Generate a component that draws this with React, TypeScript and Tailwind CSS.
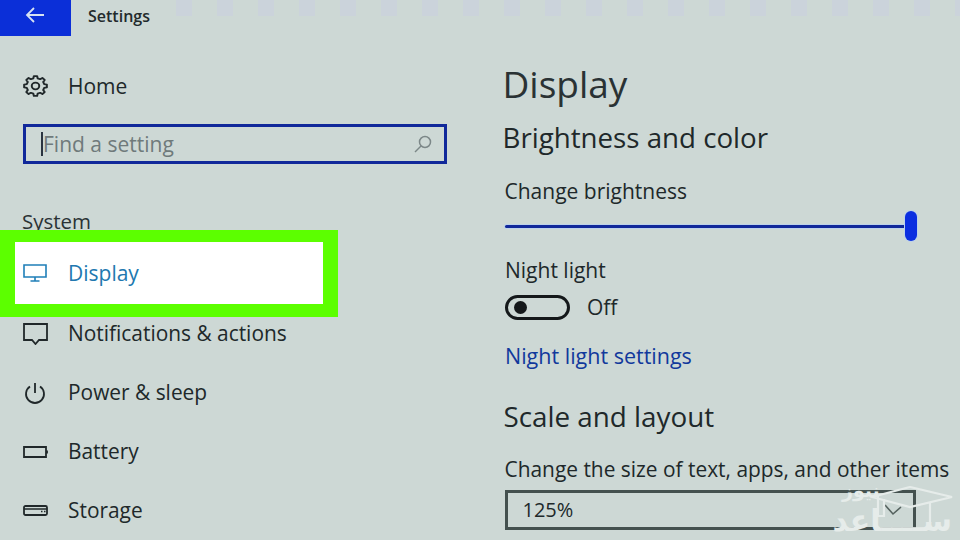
import React from "react";

function Item({ icon, label }: { icon: React.ReactNode; label: string }) {
  return (
    <div className="flex h-[59px] items-center pl-[23px]">
      <span className="flex w-[45px] shrink-0">{icon}</span>
      <span className="text-[20.9px] leading-none text-[#20282a]">{label}</span>
    </div>
  );
}

const stroke = { fill: "none", stroke: "currentColor", strokeWidth: 1.8 } as const;

function gearPath() {
  const teeth = 8;
  const pts: string[] = [];
  for (let i = 0; i < teeth; i++) {
    const a = (i * 2 * Math.PI) / teeth;
    const w = Math.PI / teeth;
    const list: [number, number][] = [
      [8.6, a - w * 0.62],
      [11, a - w * 0.36],
      [11, a + w * 0.36],
      [8.6, a + w * 0.62],
    ];
    for (const [r, t] of list) {
      pts.push(`${(12 + r * Math.sin(t)).toFixed(2)} ${(12 - r * Math.cos(t)).toFixed(2)}`);
    }
  }
  return "M" + pts.join("L") + "Z";
}

export default function App() {
  return (
    <div className="relative flex h-[540px] w-[960px] overflow-hidden bg-[#cdd8d5] [font-family:'Open_Sans','Noto_Sans',sans-serif]">
      <div className="absolute left-[176px] right-0 top-0 h-[16px] bg-[repeating-linear-gradient(90deg,#cbd3db_0,#cbd3db_16px,#cdd8d5_16px,#cdd8d5_41px)]" />
      <aside className="relative w-[502.5px] shrink-0">
        <div className="flex h-[36px] items-start">
          <div className="relative flex h-[36px] w-[71px] items-center justify-center bg-[#0b2fd8] pb-[6px] pr-[2px] text-[#d7e2f2]">
            <svg width="20" height="16" viewBox="0 0 20 16" {...stroke}>
              <path d="M19 8H2M9 1 2 8l7 7" />
            </svg>
          </div>
          <span className="ml-[17px] mt-[6px] text-[16px] font-semibold leading-[20px] text-[#222a2c]">Settings</span>
        </div>

        <div className="mt-[32px] flex h-[36px] items-center pl-[23px]">
          <span className="flex w-[45px] text-[#20282a]">
            <svg width="25" height="22" viewBox="0 0 24 24" preserveAspectRatio="none" fill="none" stroke="currentColor" strokeWidth="1.9" strokeLinejoin="round">
              <path d={gearPath()} />
              <circle cx="12" cy="12" r="3.6" />
            </svg>
          </span>
          <span className="text-[21px] leading-none text-[#20282a]">Home</span>
        </div>

        <div className="ml-[23px] mt-[20px] flex h-[40px] w-[424px] items-center border-[3px] border-[#10289a] pl-[15px] pr-[11px]">
          <span className="h-[24px] w-[2px] shrink-0 bg-[#2a3440]" />
          <span className="flex-1 text-[21px] leading-none text-[#6f7a7b]">Find a setting</span>
          <svg width="20" height="20" viewBox="0 0 20 20" fill="none" stroke="#7c8788" strokeWidth="1.5">
            <circle cx="12" cy="8" r="5.5" />
            <path d="M8 12 2 18" />
          </svg>
        </div>

        <div className="ml-[22px] mt-[44px] h-[23px] text-[20.5px] leading-[26px] text-[#2a3234]">System</div>

        <div className="relative z-10 mt-[-1px] h-[87px] w-[338px] border-x-[15px] border-b-[13px] border-t-[12px] border-[#5cff00] bg-white">
          <div className="ml-[-15px] flex h-[62px] items-center pl-[23px]">
            <span className="flex w-[45px] text-[#1f7fb8]">
              <svg width="24" height="20" viewBox="0 0 24 20" fill="none" stroke="currentColor" strokeWidth="1.6">
                <path d="M1 2h22v12H1zM12 14v4M7.5 18h9" />
              </svg>
            </span>
            <span className="text-[21px] leading-none text-[#2178b0]">Display</span>
          </div>
        </div>

        <div className="mt-[-13px] flex flex-col">
          <Item
            label="Notifications & actions"
            icon={
              <svg width="25" height="22" viewBox="0 0 25 22" {...stroke} className="text-[#20282a]">
                <path d="M1 1h23v16h-8l-3.5 4L9 17H1z" />
              </svg>
            }
          />
          <Item
            label="Power & sleep"
            icon={
              <svg width="24" height="22" viewBox="0 0 24 22" {...stroke} className="text-[#20282a]">
                <path d="M12 1v10M7 4.5a9 9 0 1 0 10 0" />
              </svg>
            }
          />
          <Item
            label="Battery"
            icon={
              <svg width="25" height="12" viewBox="0 0 25 12" {...stroke} className="text-[#20282a]">
                <path d="M1 1h22v10H1zM24 4.5v3" />
              </svg>
            }
          />
          <Item
            label="Storage"
            icon={
              <svg width="25" height="11" viewBox="0 0 25 11" {...stroke} className="text-[#20282a]">
                <rect x="1" y="1" width="23" height="9" rx="1.5" />
                <path d="M1 4h23M18 6.5h1.5M21 6.5h1.5" strokeWidth="1.3" />
              </svg>
            }
          />
        </div>
      </aside>

      <main className="relative min-w-0 flex-1 text-[#20282a]">
        <h1 className="mt-[61px] text-[37px] font-normal leading-[46px] text-[#2a3234]">Display</h1>
        <h2 className="mt-[14px] text-[27.7px] font-normal leading-[32px]">Brightness and color</h2>

        <div className="ml-[2px] mt-[26px] text-[21px] leading-[24px]">Change brightness</div>
        <div className="ml-[2px] mt-[8px] flex h-[30px] w-[412px] items-center">
          <div className="h-[3px] flex-1 rounded-full bg-[#10289a] shadow-[0_0_0_1px_#bcd2ea]" />
          <div className="ml-[-1px] h-[30px] w-[12px] rounded-full bg-[#0b2ee0] shadow-[0_0_0_1px_#bcd2ea]" />
        </div>

        <div className="ml-[2.5px] mt-[17px] text-[21px] leading-[24px]">Night light</div>
        <div className="ml-[2.5px] mt-[12px] flex h-[26px] items-center">
          <div className="flex h-[25px] w-[65px] items-center rounded-full border-[3px] border-[#14181a] pl-[6px]">
            <div className="h-[13px] w-[13px] rounded-full bg-[#14181a]" />
          </div>
          <span className="ml-[17px] text-[21px] leading-none">Off</span>
        </div>

        <div className="ml-[2.5px] mt-[24px] text-[21.5px] leading-[24px] text-[#11389c]">Night light settings</div>

        <h2 className="ml-[1px] mt-[32px] text-[27.8px] font-normal leading-[32px]">Scale and layout</h2>

        <div className="ml-[2px] mt-[25px] whitespace-nowrap text-[20.9px] leading-[24px]">Change the size of text, apps, and other items</div>
        <div className="ml-[2px] mt-[9px] flex h-[40px] w-[411px] items-center justify-between border-[3px] border-[#44514f] pl-[15px] pr-[11px]">
          <span className="text-[20px] leading-none">125%</span>
          <svg width="18" height="12" viewBox="0 0 18 12" fill="none" stroke="#55625f" strokeWidth="1.6">
            <path d="m1 1 8 9 8-7" />
          </svg>
        </div>

        <div className="absolute bottom-0 right-0 h-[58px] w-[140px] text-[#e6ecea]">
          <svg className="absolute left-[50px] top-[4px]" width="84" height="40" viewBox="0 0 84 40" fill="none" stroke="currentColor" strokeWidth="2.2">
            <path d="M2 11 40 1l42 10-42 10zM60 17v20M8 10v20h6V13" />
          </svg>
          <span className="absolute left-[22px] top-[-3px] text-[19px] font-bold leading-[22px] [font-family:'Noto_Sans','DejaVu_Sans',sans-serif]">نیوز</span>
          <span className="absolute bottom-0 left-0 w-[132px] whitespace-nowrap text-right text-[30px] font-bold leading-[38px] [font-family:'DejaVu_Sans',sans-serif]" dir="rtl">ســــاعد</span>
        </div>
      </main>
    </div>
  );
}
